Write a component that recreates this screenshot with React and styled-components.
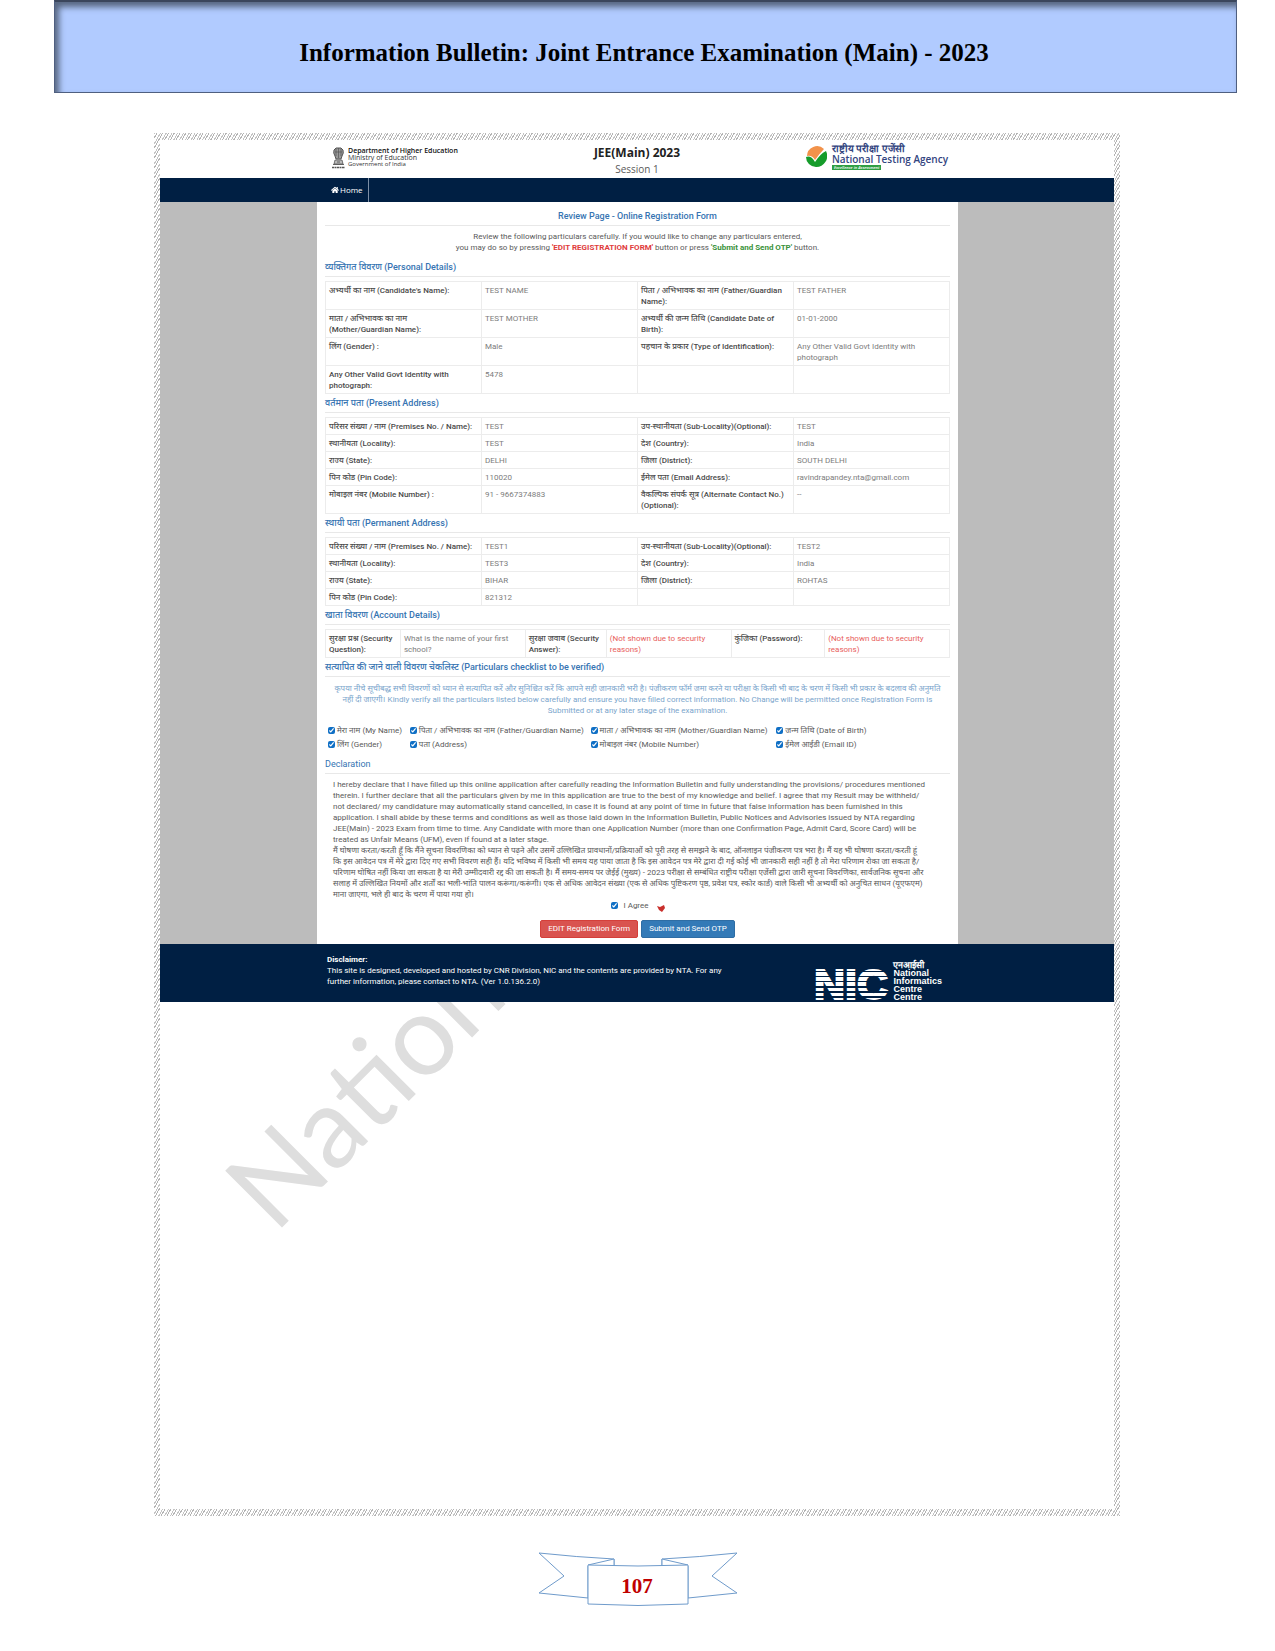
import React, { useState } from "react";
import styled, { createGlobalStyle } from "styled-components";
import { FaHome } from "react-icons/fa";

const GlobalStyle = createGlobalStyle`
  * {
    box-sizing: border-box;
  }

  body {
    margin: 0;
    background: #fff;
    color: #5a5a5a;
    font-family: Roboto, "Open Sans", "Noto Sans Devanagari", sans-serif;
    font-size: 8px;
    line-height: 11px;
  }
`;

const Banner = styled.header`
  display: flex;
  align-items: center;
  justify-content: center;
  height: 93px;
  margin: 0 38px 0 54px;
  padding: 12px 0 0;
  background: #b1cbff;
  border: 1px solid #4f5f80;
  border-top: 2px solid #3b465c;
  box-shadow: inset 4px 5px 6px #56657f;
`;

const BannerTitle = styled.h1`
  margin: 0;
  padding-right: 3px;
  color: #000;
  font-family: "Liberation Serif", serif;
  font-size: 25px;
  line-height: 28px;
  font-weight: bold;
`;

const Frame = styled.main`
  margin: 40px 155px 0 154px;
  padding: 7px 6px;
  background: repeating-linear-gradient(
    -60deg,
    #b4b4b4 0 1px,
    #fff 1px 2px,
    #c4c4c4 2px 3px,
    #fff 3px 5px
  );
`;

const Sheet = styled.div`
  position: relative;
  background: #fff;
`;

const Site = styled.div`
  position: relative;
  z-index: 1;
`;

const SiteHeader = styled.div`
  display: grid;
  grid-template-columns: 1fr auto 1fr;
  height: 38px;
  padding: 0 166px;
  background: #fff;
  font-family: "Open Sans", sans-serif;
`;

const Ministry = styled.div`
  display: flex;
  gap: 3px;
  padding: 7px 0 0 6px;
  color: #333;
  font-size: 7px;
  line-height: 7px;
`;

const MinistryText = styled.div`
  display: flex;
  flex-direction: column;
`;

const Department = styled.span`
  color: #111;
  font-weight: 600;
`;

const SmallText = styled.span`
  font-size: 6px;
`;

const Exam = styled.div`
  padding-top: 6px;
  text-align: center;
`;

const ExamName = styled.h2`
  margin: 0;
  color: #222;
  font-size: 12px;
  line-height: 14px;
  font-weight: 700;
`;

const Session = styled.div`
  padding-top: 2px;
  font-size: 10px;
  line-height: 14px;
`;

const Agency = styled.div`
  display: flex;
  justify-content: flex-end;
  gap: 5px;
  padding-top: 3px;
  color: #33457f;
`;

const AgencyText = styled.div`
  display: flex;
  flex-direction: column;
  align-items: flex-start;
  font-size: 10px;
  line-height: 11px;
  font-weight: 600;
  white-space: nowrap;
`;

const Motto = styled.span`
  padding: 0 2px;
  background: #2f9e44;
  color: #fff;
  font-size: 4px;
  line-height: 5px;
  font-style: italic;
`;

const Nav = styled.nav`
  display: flex;
  height: 24px;
  padding: 0 156px 0 171px;
  background: #001f43;
`;

const NavLink = styled.a`
  display: flex;
  align-items: center;
  gap: 1px;
  padding: 0 5px 1px 0;
  border-right: 1px solid #7d8fa6;
  color: #fff;
  font-family: "Open Sans", sans-serif;
  font-size: 8px;
  text-decoration: none;
`;

const Gutters = styled.div`
  padding: 0 156px 0 157px;
  background: #bcbcbc;
`;

const Content = styled.div`
  padding: 5px 8px 6px;
  background: #fff;
`;

const SectionTitle = styled.h3`
  margin: 0 0 ${(p) => p.$gap || 4}px;
  padding: 3px 0 2px;
  border-bottom: 1px solid #e8e8e8;
  color: #3674b2;
  font-size: 9px;
  line-height: 13px;
  font-weight: ${(p) => (p.$light ? 400 : 500)};
  text-align: ${(p) => (p.$center ? "center" : "left")};
`;

const Intro = styled.p`
  margin: 0 0 5px;
  text-align: center;
`;

const Strong = styled.strong`
  color: ${(p) => p.$color};
  font-weight: 700;
`;

const Table = styled.table`
  width: 100%;
  border-collapse: collapse;
  table-layout: fixed;
`;

const Row = styled.tr`
  height: ${(p) => (p.$tall ? 28 : 17)}px;
`;

const cell = `
  padding: 3px 1px 2px 3px;
  border: 1px solid #ececec;
  text-align: left;
  vertical-align: top;
  white-space: pre-line;
`;

const Label = styled.th`
  ${cell}
  color: #4a4a4a;
  font-weight: 500;
`;

const Value = styled.td`
  ${cell}
  color: ${(p) => (p.$hidden ? "#e8605c" : "#7c7c7c")};
`;

const Notice = styled.p`
  margin: 0 0 9px;
  color: #7aa5cc;
  text-align: center;
  white-space: nowrap;
`;

const Checklist = styled.div`
  display: grid;
  grid-template-columns: 82fr 181fr 186fr 174fr;
  row-gap: 3px;
  padding: 0 0 5px 3px;
`;

const CheckLabel = styled.label`
  display: flex;
  align-items: center;
  gap: ${(p) => p.$gap || 2}px;
  min-width: 0;
  height: 11px;
  white-space: nowrap;
`;

const Check = styled.input`
  width: 7px;
  height: 7px;
  margin: 0;
  accent-color: #0f6fc5;
`;

const Declaration = styled.p`
  margin: 0;
  padding: 0 8px;
  white-space: nowrap;
`;

const Agree = styled.div`
  display: flex;
  justify-content: center;
  gap: 8px;
  padding: 0 0 8px;
`;

const Actions = styled.div`
  display: flex;
  justify-content: center;
  gap: 3px;
`;

const Button = styled.button`
  height: 18px;
  padding: 0 7px;
  border: 1px solid ${(p) => p.$border};
  border-radius: 2px;
  background: ${(p) => p.$color};
  color: #fff;
  font-family: inherit;
  font-size: 8px;
  line-height: 16px;
`;

const SiteFooter = styled.footer`
  display: flex;
  justify-content: space-between;
  height: 58px;
  padding: 10px 172px 0 167px;
  background: #001f43;
  color: #fff;
`;

const Nic = styled.div`
  display: flex;
  gap: 3px;
  padding-top: 4px;
`;

const NicMark = styled.svg`
  overflow: visible;
`;

const NicText = styled.div`
  display: flex;
  flex-direction: column;
  padding-top: 3px;
  font-family: "Liberation Sans", sans-serif;
  font-size: 9px;
  line-height: 8px;
  font-weight: bold;
`;

const Blank = styled.div`
  height: 507px;
`;

const Watermark = styled.div`
  position: absolute;
  left: 124px;
  top: 992px;
  color: #dedede;
  font-family: Lato, sans-serif;
  font-size: 112px;
  line-height: 112px;
  transform: rotate(-45deg);
  transform-origin: 0 100%;
`;

const PageNumber = styled.footer`
  display: flex;
  justify-content: center;
  padding: 36px 0 43px;
`;

const personal = [
  ["अभ्यर्थी का नाम (Candidate's Name):", "TEST NAME", "पिता / अभिभावक का नाम (Father/Guardian\nName):", "TEST FATHER"],
  ["माता / अभिभावक का नाम\n(Mother/Guardian Name):", "TEST MOTHER", "अभ्यर्थी की जन्म तिथि (Candidate Date of\nBirth):", "01-01-2000"],
  ["लिंग (Gender) :", "Male", "पहचान के प्रकार (Type of Identification):", "Any Other Valid Govt Identity with\nphotograph"],
  ["Any Other Valid Govt Identity with\nphotograph:", "5478", "", ""],
];

const present = [
  ["परिसर संख्या / नाम (Premises No. / Name):", "TEST", "उप-स्थानीयता (Sub-Locality)(Optional):", "TEST"],
  ["स्थानीयता (Locality):", "TEST", "देश (Country):", "India"],
  ["राज्य (State):", "DELHI", "जिला (District):", "SOUTH DELHI"],
  ["पिन कोड (Pin Code):", "110020", "ईमेल पता (Email Address):", "ravindrapandey.nta@gmail.com"],
  ["मोबाइल नंबर (Mobile Number) :", "91 - 9667374883", "वैकल्पिक संपर्क सूत्र (Alternate Contact No.)\n(Optional):", "--"],
];

const permanent = [
  ["परिसर संख्या / नाम (Premises No. / Name):", "TEST1", "उप-स्थानीयता (Sub-Locality)(Optional):", "TEST2"],
  ["स्थानीयता (Locality):", "TEST3", "देश (Country):", "India"],
  ["राज्य (State):", "BIHAR", "जिला (District):", "ROHTAS"],
  ["पिन कोड (Pin Code):", "821312", "", ""],
];

const account = [
  ["सुरक्षा प्रश्न (Security\nQuestion):", "What is the name of your first\nschool?", false],
  ["सुरक्षा जवाब (Security\nAnswer):", "(Not shown due to security\nreasons)", true],
  ["कुंजिका (Password):", "(Not shown due to security\nreasons)", true],
];

const checks = [
  "मेरा नाम (My Name)",
  "पिता / अभिभावक का नाम (Father/Guardian Name)",
  "माता / अभिभावक का नाम (Mother/Guardian Name)",
  "जन्म तिथि (Date of Birth)",
  "लिंग (Gender)",
  "पता (Address)",
  "मोबाइल नंबर (Mobile Number)",
  "ईमेल आईडी (Email ID)",
];

const notice = [
  "कृपया नीचे सूचीबद्ध सभी विवरणों को ध्यान से सत्यापित करें और सुनिश्चित करें कि आपने सही जानकारी भरी है। पंजीकरण फॉर्म जमा करने या परीक्षा के किसी भी बाद के चरण में किसी भी प्रकार के बदलाव की अनुमति",
  "नहीं दी जाएगी। Kindly verify all the particulars listed below carefully and ensure you have filled correct information. No Change will be permitted once Registration Form is",
  "Submitted or at any later stage of the examination.",
];

const declaration = [
  "I hereby declare that I have filled up this online application after carefully reading the Information Bulletin and fully understanding the provisions/ procedures mentioned",
  "therein. I further declare that all the particulars given by me in this application are true to the best of my knowledge and belief. I agree that my Result may be withheld/",
  "not declared/ my candidature may automatically stand cancelled, in case it is found at any point of time in future that false information has been furnished in this",
  "application. I shall abide by these terms and conditions as well as those laid down in the Information Bulletin, Public Notices and Advisories issued by NTA regarding",
  "JEE(Main) - 2023 Exam from time to time. Any Candidate with more than one Application Number (more than one Confirmation Page, Admit Card, Score Card) will be",
  "treated as Unfair Means (UFM), even if found at a later stage.",
  "मैं घोषणा करता/करती हूँ कि मैंने सूचना विवरणिका को ध्यान से पढ़ने और उसमें उल्लिखित प्रावधानों/प्रक्रियाओं को पूरी तरह से समझने के बाद, ऑनलाइन पंजीकरण पत्र भरा है। मैं यह भी घोषणा करता/करती हूं",
  "कि इस आवेदन पत्र में मेरे द्वारा दिए गए सभी विवरण सही हैं। यदि भविष्य में किसी भी समय यह पाया जाता है कि इस आवेदन पत्र मेरे द्वारा दी गई कोई भी जानकारी सही नहीं है तो मेरा परिणाम रोका जा सकता है/",
  "परिणाम घोषित नहीं किया जा सकता है या मेरी उम्मीदवारी रद्द की जा सकती है। मैं समय-समय पर जेईई (मुख्य) - 2023 परीक्षा से सम्बंधित राष्ट्रीय परीक्षा एजेंसी द्वारा जारी सूचना विवरणिका, सार्वजनिक सूचना और",
  "सलाह में उल्लिखित नियमों और शर्तों का भली-भांति पालन करूंगा/करूंगी। एक से अधिक आवेदन संख्या (एक से अधिक पुष्टिकरण पृष्ठ, प्रवेश पत्र, स्कोर कार्ड) वाले किसी भी अभ्यर्थी को अनुचित साधन (यूएफएम)",
  "माना जाएगा, भले ही बाद के चरण में पाया गया हो।",
];

function Lines({ items }) {
  return items.map((line, i) => (
    <React.Fragment key={i}>
      {i > 0 && <br />}
      {line}
    </React.Fragment>
  ));
}

function DetailsTable({ rows, tall }) {
  return (
    <Table>
      <tbody>
        {rows.map((row) => (
          <Row key={row[0]} $tall={tall}>
            <Label scope="row">{row[0]}</Label>
            <Value>{row[1]}</Value>
            <Label scope="row">{row[2]}</Label>
            <Value>{row[3]}</Value>
          </Row>
        ))}
      </tbody>
    </Table>
  );
}

function AccountTable() {
  return (
    <Table>
      <colgroup>
        {[12, 20, 13, 20, 15, 20].map((w, i) => (
          <col key={i} width={`${w}%`} />
        ))}
      </colgroup>
      <tbody>
        <Row $tall>
          {account.map(([label, value, hidden]) => (
            <React.Fragment key={label}>
              <Label scope="row">{label}</Label>
              <Value $hidden={hidden}>{value}</Value>
            </React.Fragment>
          ))}
        </Row>
      </tbody>
    </Table>
  );
}

function Emblem() {
  return (
    <svg width="13" height="22" viewBox="0 0 13 22" fill="none" stroke="#555">
      <path d="M2 3 Q1 6 3 9 L4 12 H9 L10 9 Q12 6 11 3 L9 1 H4 Z" fill="#999" strokeWidth="1" />
      <path d="M4 2 V9 M6.5 1 V11 M9 2 V9 M3 5 H10" strokeWidth=".7" />
      <path d="M3 13 H10 L11 17 H2 Z" fill="#bbb" strokeWidth=".8" />
      <path d="M5 15 H8 M1 17.5 H12" strokeWidth=".9" />
      <path d="M0 20.5 H13" strokeWidth="1.4" strokeDasharray="2 .5" />
    </svg>
  );
}

function AgencyLogo() {
  return (
    <svg width="21" height="24" viewBox="0 0 21 24">
      <path d="M1 13 A10 10 0 0 1 18 6 Q14 10 9 17 Q6 12 1 13 Z" fill="#f2924a" />
      <path d="M0 14 Q5 12 9 19 Q14 11 20 8 A11 11 0 0 1 10 24 A10 10 0 0 1 0 14 Z" fill="#169c2b" />
    </svg>
  );
}

function NicLogo() {
  return (
    <NicMark width="76" height="44" viewBox="0 0 76 44">
      <text x="0" y="41" fill="#fff" stroke="#fff" strokeWidth="2" fontFamily="Liberation Sans, sans-serif" fontWeight="bold" fontSize="43">
        NIC
      </text>
      {[13, 18, 23, 28, 33, 38].map((y, i) => (
        <rect key={y} x="0" y={y} width="76" height={i < 3 ? 1 : 2} fill="#001f43" />
      ))}
    </NicMark>
  );
}

function Ribbon() {
  return (
    <svg width="200" height="56" viewBox="0 0 200 56" fill="#fff" stroke="#6f9bcb" strokeWidth="1">
      <path d="M50 46 L1 41 L26 24 L1 1 Q38 5 76 7 V14 H50 Z" />
      <path d="M150 46 L199 41 L174 24 L199 1 Q162 5 124 7 V14 H150 Z" />
      <path d="M50 13 L76 7 V14 M150 13 L124 7 V14" />
      <path d="M50 13 Q100 15 150 13 V52 Q100 55 50 52 Z" />
      <text x="99" y="41" textAnchor="middle" fill="#c00000" stroke="none" fontFamily="Liberation Serif, serif" fontWeight="bold" fontSize="21">
        107
      </text>
    </svg>
  );
}

function App() {
  const [checked, setChecked] = useState(checks.map(() => true));
  const [agreed, setAgreed] = useState(true);

  const toggle = (index) => {
    setChecked(checked.map((value, i) => (i === index ? !value : value)));
  };

  return (
    <>
      <GlobalStyle />
      <Banner>
        <BannerTitle>Information Bulletin: Joint Entrance Examination (Main) - 2023</BannerTitle>
      </Banner>
      <Frame>
        <Sheet>
          <Watermark>National</Watermark>
          <Site>
            <SiteHeader>
              <Ministry>
                <Emblem />
                <MinistryText>
                  <Department>Department of Higher Education</Department>
                  <span>Ministry of Education</span>
                  <SmallText>Government of India</SmallText>
                </MinistryText>
              </Ministry>
              <Exam>
                <ExamName>JEE(Main) 2023</ExamName>
                <Session>Session 1</Session>
              </Exam>
              <Agency>
                <AgencyLogo />
                <AgencyText>
                  <span>राष्ट्रीय परीक्षा एजेंसी</span>
                  <span>National Testing Agency</span>
                  <Motto>Excellence in Assessment</Motto>
                </AgencyText>
              </Agency>
            </SiteHeader>
            <Nav>
              <NavLink href="#home">
                <FaHome size={8} /> Home
              </NavLink>
            </Nav>
            <Gutters>
              <Content>
                <SectionTitle $center $gap={5}>
                  Review Page - Online Registration Form
                </SectionTitle>
                <Intro>
                  Review the following particulars carefully. If you would like to change any particulars entered,
                  <br />
                  you may do so by pressing <Strong $color="#e03c3c">'EDIT REGISTRATION FORM'</Strong> button or press{" "}
                  <Strong $color="#3a923a">'Submit and Send OTP'</Strong> button.
                </Intro>
                <SectionTitle>व्यक्तिगत विवरण (Personal Details)</SectionTitle>
                <DetailsTable rows={personal} tall />
                <SectionTitle>वर्तमान पता (Present Address)</SectionTitle>
                <DetailsTable rows={present} />
                <SectionTitle>स्थायी पता (Permanent Address)</SectionTitle>
                <DetailsTable rows={permanent} />
                <SectionTitle>खाता विवरण (Account Details)</SectionTitle>
                <AccountTable />
                <SectionTitle $gap={6}>
                  सत्यापित की जाने वाली विवरण चेकलिस्ट (Particulars checklist to be verified)
                </SectionTitle>
                <Notice>
                  <Lines items={notice} />
                </Notice>
                <Checklist>
                  {checks.map((text, i) => (
                    <CheckLabel key={text}>
                      <Check type="checkbox" checked={checked[i]} onChange={() => toggle(i)} />
                      {text}
                    </CheckLabel>
                  ))}
                </Checklist>
                <SectionTitle $light $gap={5}>
                  Declaration
                </SectionTitle>
                <Declaration>
                  <Lines items={declaration} />
                </Declaration>
                <Agree>
                  <CheckLabel $gap={6}>
                    <Check type="checkbox" checked={agreed} onChange={() => setAgreed(!agreed)} />I Agree
                  </CheckLabel>
                  <svg width="8" height="12" viewBox="0 0 8 12">
                    <path d="M0 6 L3 7 L7 5 L8 8 L5 12 L2 10 Z" fill="#c9302c" />
                  </svg>
                </Agree>
                <Actions>
                  <Button type="button" $color="#d9534f" $border="#d43f3a">
                    EDIT Registration Form
                  </Button>
                  <Button type="button" $color="#337ab7" $border="#2e6da4">
                    Submit and Send OTP
                  </Button>
                </Actions>
              </Content>
            </Gutters>
            <SiteFooter>
              <div>
                <strong>Disclaimer:</strong>
                <br />
                This site is designed, developed and hosted by CNR Division, NIC and the contents are provided by NTA. For any
                <br />
                further information, please contact to NTA. (Ver 1.0.136.2.0)
              </div>
              <Nic>
                <NicLogo />
                <NicText>
                  <span>एनआईसी</span>
                  <span>National</span>
                  <span>Informatics</span>
                  <span>Centre</span>
                  <span>Centre</span>
                </NicText>
              </Nic>
            </SiteFooter>
          </Site>
          <Blank />
        </Sheet>
      </Frame>
      <PageNumber>
        <Ribbon />
      </PageNumber>
    </>
  );
}

export default App;
